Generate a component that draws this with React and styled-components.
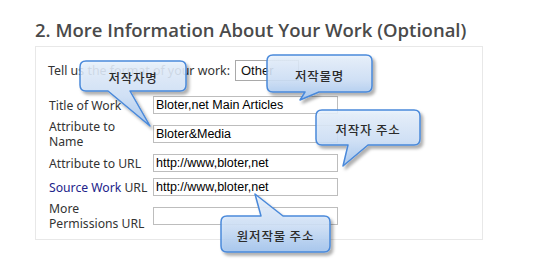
import React from "react";
import styled, { createGlobalStyle } from "styled-components";

const Global = createGlobalStyle`
  html, body { margin: 0; padding: 0; background: #fff; }
  * { box-sizing: border-box; }
`;

const Page = styled.div`
  position: relative;
  width: 550px;
  height: 274px;
  padding: 19px 0 0 35px;
  overflow: hidden;
  font-family: "DejaVu Sans", sans-serif;
`;

const Heading = styled.h2`
  margin: 0;
  height: 27px;
  font-family: "Open Sans", "DejaVu Sans", sans-serif;
  font-weight: 600;
  font-size: 18.5px;
  line-height: 22px;
  color: #4a4a4a;
  white-space: nowrap;
`;

const Panel = styled.div`
  width: 448px;
  border: 1px solid #e8e8e8;
  padding: 13px 12px 8px 12px;
`;

const FormatRow = styled.div`
  display: flex;
  align-items: center;
  gap: 5px;
  height: 21px;
`;

const Label = styled.span`
  font-family: "Noto Sans", "DejaVu Sans", sans-serif;
  font-size: 12.4px;
  line-height: 15px;
  color: #333;
`;

const SelectBox = styled.div`
  width: 64px;
  height: 21px;
  border: 1px solid #a9a9a9;
  padding: 1px 5px;
  font-family: "Liberation Sans", sans-serif;
  font-size: 13px;
  line-height: 17px;
  color: #111;
`;

const Fields = styled.div`
  display: grid;
  grid-template-columns: 104px 185px;
  grid-template-rows: 20px 30px 20px 20px 30px;
  row-gap: 4px;
  align-items: center;
  margin-top: 14px;
  margin-left: 1px;
`;

const FieldLabel = styled.label`
  font-family: "Noto Sans", "DejaVu Sans", sans-serif;
  font-size: 12.2px;
  line-height: 15px;
  color: #333;
`;

const LinkText = styled.span`
  color: #22238a;
`;

const TextBox = styled.div`
  height: 18px;
  border: 1px solid #bdbdbd;
  padding: 0 2px;
  font-family: "Liberation Sans", sans-serif;
  font-size: 12.5px;
  line-height: 16px;
  color: #000;
  white-space: nowrap;
  overflow: hidden;
`;

const CalloutWrap = styled.div`
  position: absolute;
  pointer-events: none;
  display: flex;
  align-items: center;
  justify-content: center;
`;

const CalloutShape = styled.svg`
  position: absolute;
  left: 0;
  top: 0;
  overflow: visible;
`;

const CalloutText = styled.span`
  position: relative;
  font-family: "Noto Sans CJK KR", sans-serif;
  font-weight: 500;
  font-size: 12.5px;
  letter-spacing: 0.8px;
  color: #2b2b2b;
  padding-top: 3px;
`;

function bubblePath(w, h, r, t) {
  let d = `M ${r} 0 `;
  if (t.side === "top") d += `L ${t.a} 0 L ${t.tx} ${t.ty} L ${t.b} 0 `;
  d += `L ${w - r} 0 Q ${w} 0 ${w} ${r} L ${w} ${h - r} Q ${w} ${h} ${w - r} ${h} `;
  if (t.side === "bottom") d += `L ${t.b} ${h} L ${t.tx} ${t.ty} L ${t.a} ${h} `;
  d += `L ${r} ${h} Q 0 ${h} 0 ${h - r} L 0 ${r} Q 0 0 ${r} 0 Z`;
  return d;
}

function Callout({ id, x, y, w, h, tail, children }) {
  return (
    <CalloutWrap style={{ left: x, top: y, width: w, height: h }}>
      <CalloutShape width={w} height={h}>
        <defs>
          <linearGradient id={`g${id}`} x1="0" y1="0" x2="0" y2="1">
            <stop offset="0" stopColor="#eaf3fe" />
            <stop offset="0.55" stopColor="#cfe2f9" />
            <stop offset="1" stopColor="#a2c4ef" />
          </linearGradient>
          <filter id={`s${id}`} x="-20%" y="-20%" width="150%" height="160%">
            <feDropShadow dx="2.5" dy="3" stdDeviation="1.8" floodColor="#000" floodOpacity="0.35" />
          </filter>
        </defs>
        <path
          d={bubblePath(w, h, 6, tail)}
          fill={`url(#g${id})`}
          fillOpacity="0.86"
          stroke="#4a89da"
          strokeWidth="1.5"
          strokeLinejoin="round"
          filter={`url(#s${id})`}
        />
      </CalloutShape>
      <CalloutText>{children}</CalloutText>
    </CalloutWrap>
  );
}

export default function App() {
  return (
    <>
      <Global />
      <Page>
        <Heading>2. More Information About Your Work (Optional)</Heading>
        <Panel>
          <FormatRow>
            <Label>Tell us the format of your work:</Label>
            <SelectBox>Other</SelectBox>
          </FormatRow>
          <Fields>
            <FieldLabel>Title of Work</FieldLabel>
            <TextBox>Bloter,net Main Articles</TextBox>
            <FieldLabel>Attribute to<br />Name</FieldLabel>
            <TextBox>Bloter&amp;Media</TextBox>
            <FieldLabel>Attribute to URL</FieldLabel>
            <TextBox>http://www,bloter,net</TextBox>
            <FieldLabel><LinkText>Source Work</LinkText> URL</FieldLabel>
            <TextBox>http://www,bloter,net</TextBox>
            <FieldLabel>More<br />Permissions URL</FieldLabel>
            <TextBox />
          </Fields>
        </Panel>

        <Callout id="1" x={80} y={61} w={106} h={30} tail={{ side: "bottom", a: 28, b: 50, tx: 70, ty: 65 }}>
          저작자명
        </Callout>
        <Callout id="2" x={267} y={55} w={105} h={37} tail={{ side: "bottom", a: 38, b: 52, tx: 33, ty: 45 }}>
          저작물명
        </Callout>
        <Callout id="3" x={316} y={110} w={104} h={35} tail={{ side: "bottom", a: 32, b: 52, tx: 27, ty: 56 }}>
          저작자 주소
        </Callout>
        <Callout id="4" x={221} y={216} w={109} h={36} tail={{ side: "top", a: 40, b: 62, tx: 34, ty: -22 }}>
          원저작물 주소
        </Callout>
      </Page>
    </>
  );
}
